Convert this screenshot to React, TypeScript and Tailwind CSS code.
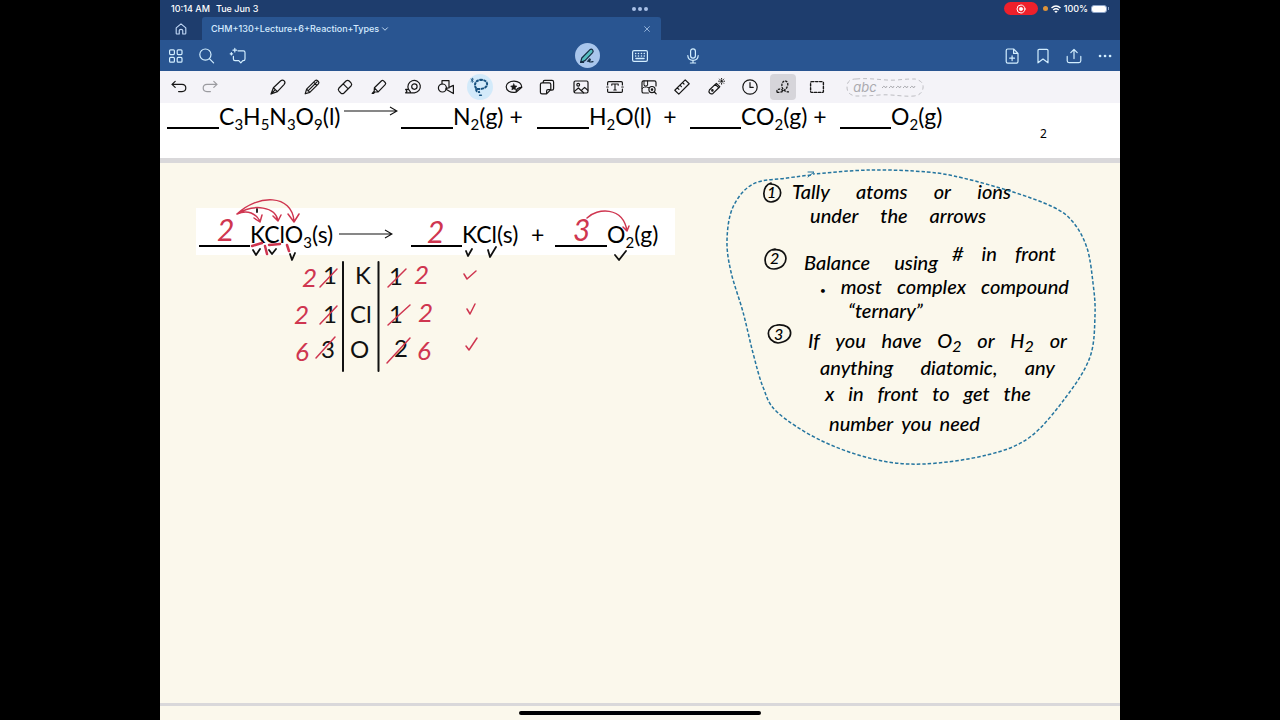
import type { ReactNode } from "react";
import clsx from "clsx";

type Point = [number, number];

/** Curve through the given points (Catmull-Rom as cubic Béziers). */
function curve(points: Point[]): string {
  let d = `M${points[0][0]} ${points[0][1]}`;
  for (let i = 0; i < points.length - 1; i++) {
    const a = points[Math.max(i - 1, 0)];
    const b = points[i];
    const c = points[i + 1];
    const e = points[Math.min(i + 2, points.length - 1)];
    d += `C${b[0] + (c[0] - a[0]) / 6} ${b[1] + (c[1] - a[1]) / 6} ${c[0] - (e[0] - b[0]) / 6} ${c[1] - (e[1] - b[1]) / 6} ${c[0]} ${c[1]}`;
  }
  return d;
}

const lasso: Point[] = [
  [811, 175], [787, 178], [753, 184], [733, 207], [727, 240], [731, 272], [743, 312], [753, 353],
  [763, 387], [777, 412], [820, 440], [873, 459], [923, 464], [987, 455], [1030, 437], [1066, 397],
  [1090, 357], [1095, 315], [1093, 283], [1087, 248], [1073, 222], [1053, 207], [1013, 192],
  [963, 178], [927, 172], [870, 170], [813, 174],
];

function Icon({ children, className = "size-5" }: { children: ReactNode; className?: string }) {
  return (
    <svg viewBox="0 0 20 20" fill="none" stroke="currentColor" strokeWidth="1.2" strokeLinecap="round" strokeLinejoin="round" className={className} aria-hidden="true">
      {children}
    </svg>
  );
}

const tools: { name: string; icon: ReactNode }[] = [
  {
    name: "Pen",
    icon: <path d="M3 17 5.400 10.800 12.500 4Q14.500 2.400 16.200 3.900 17.800 5.600 16 7.600L9.400 14.600ZM5.400 10.800 9.400 14.600M3 17 6.800 13.200" />,
  },
  {
    name: "Pencil",
    icon: <path d="M3.200 16.800 4.600 12.200 13.200 3.600Q14.400 2.600 15.600 3.700L16.500 4.600Q17.400 5.800 16.400 6.800L7.800 15.400ZM4.600 12.200 7.800 15.400M6 13.800 15 4.800M11.600 5.200 14.800 8.400" />,
  },
  {
    name: "Eraser",
    icon: <path d="M4 11 11 4Q12.600 2.600 14.200 4L16 5.800Q17.400 7.400 16 9L9 16Q7.400 17.400 5.800 16L4 14.200Q2.600 12.600 4 11ZM8.200 6.800 13.200 11.800" />,
  },
  {
    name: "Highlighter",
    icon: <path d="M3.200 16.400 5.200 14.200 5.400 10.800 12.600 3.800Q13.600 3 14.600 3.900L16.200 5.500Q17.200 6.600 16.200 7.600L9.200 14.800 5.800 15 4.600 16.400ZM5.400 10.800 9.200 14.800" />,
  },
  {
    name: "Tape",
    icon: (
      <>
        <path d="M5.600 12.400A6.200 6.200 0 1 1 11.400 15.800H2.600L4 14.200 2.600 12.400H5.600L7.400 14.800" />
        <circle cx="11.400" cy="9.600" r="2.700" />
      </>
    ),
  },
  {
    name: "Shapes",
    icon: (
      <>
        <circle cx="6.400" cy="11" r="4" />
        <path d="M6 7V3.600H13V11H10.400M9.600 12 17.400 8.400V16.600Z" />
      </>
    ),
  },
  {
    name: "Lasso",
    icon: (
      <>
        <path stroke="#17517f" strokeWidth="2" strokeDasharray="3.200 .6" strokeLinecap="butt" d="M6.600 11.800C3.600 9 4.600 3 11 2.800 17 2.800 18.600 7.400 15.800 10 13.400 12.200 8.800 12.400 6.600 11.800 5.400 13.400 7 15.600 10 14.800" />
        <path stroke="#17517f" strokeWidth="1.400" d="M9.600 18.200H11.400" />
        <path stroke="#17517f" strokeWidth=".8" d="M1 2.200 3.400 4.400 2.200 5.400V1L3.400 2.200 1 4.400" />
      </>
    ),
  },
  {
    name: "Stickers",
    icon: (
      <>
        <path d="M12 15.200C6 16.200 2.200 13.400 2.200 9.800 2.200 6.400 5.600 4.200 10 4.200S17.800 6.600 17.800 10.200L12 15.200Q11.800 11.200 17.800 10.200" />
        <path fill="currentColor" strokeWidth=".5" d="m9.800 6.800 1 2 2.200.3-1.600 1.600.4 2.200-2-1-2 1 .4-2.200-1.600-1.600 2.200-.3Z" />
      </>
    ),
  },
  {
    name: "Sticky note",
    icon: <path d="M6.200 5.600V5Q6.200 3.400 7.800 3.400H15Q16.600 3.400 16.600 5V11.600Q16.600 13.200 15 13.200H13.800M5 5.800H12.200Q13.800 5.800 13.800 7.400V12.600L9.600 16.800H5Q3.400 16.800 3.400 15.200V7.400Q3.400 5.800 5 5.800ZM9.600 16.800V14Q9.600 12.600 11 12.600H13.800" />,
  },
  {
    name: "Image",
    icon: (
      <>
        <rect x="3" y="4" width="14" height="12" rx="1.400" />
        <circle cx="7.200" cy="7.800" r="1.400" />
        <path d="m3.400 14.400 4-3.400 5.200 4.800M10.400 13.400l3.200-3 3.200 2.800" />
      </>
    ),
  },
  {
    name: "Text",
    icon: (
      <>
        <path d="M2.600 8V5.800Q2.600 4.600 3.800 4.600H16.200Q17.400 4.600 17.400 5.800V8M2.600 12V14.200Q2.600 15.400 3.800 15.400H16.200Q17.400 15.400 17.400 14.200V12M1.800 10H3.200M16.800 10H18.200" />
        <path strokeWidth="1.100" d="M6.800 8.200V7H13.200V8.200M10 7V13M8.800 13H11.200" />
      </>
    ),
  },
  {
    name: "Find in image",
    icon: (
      <>
        <path d="M9.400 16H4.600Q3 16 3 14.400V5.400Q3 3.800 4.600 3.800H15.400Q17 3.800 17 5.400V9" />
        <path strokeWidth="1" d="M3.200 11.600Q5 8.600 9.600 10.600M5 4V8.400Q6.800 9.600 8.600 8.400V4" />
        <circle cx="13" cy="12.600" r="3.100" />
        <circle cx="13" cy="12.600" r=".7" />
        <path d="m15.400 15 1.800 1.800" />
      </>
    ),
  },
  {
    name: "Ruler",
    icon: <path d="M2.800 13.200 13.200 2.900 17.200 6.800 6.800 17.100ZM5.400 10.800 6.900 12.300M8 8.200 9.400 9.600M10.600 5.600 12 7" />,
  },
  {
    name: "Laser pointer",
    icon: (
      <>
        <path d="M3.400 13 9.200 7.400 12.800 10.800 7 16.400Q5.200 17.600 3.800 16.200 2.200 14.800 3.400 13ZM9.200 7.400 10.400 6.400 13.800 9.600 12.800 10.800" />
        <circle cx="6.400" cy="13.400" r=".7" />
        <path strokeWidth="1" d="M15.600 2.200V1.400M15.600 6.400v.8M13.400 4.200h-.8M17.800 4.200h.8M14 2.600l-.5-.5M17.200 2.600l.5-.5M17.200 5.800l.5.500M14 5.800l-.5.500" />
        <circle cx="15.600" cy="4.200" r=".7" />
      </>
    ),
  },
  {
    name: "Recent",
    icon: (
      <>
        <circle cx="10" cy="10" r="7.200" />
        <path d="M10 5.600V10.400H13.200" />
      </>
    ),
  },
  {
    name: "Free selection",
    icon: (
      <path
        strokeWidth="1.300"
        strokeDasharray="2.400 1"
        strokeLinecap="butt"
        d="M4 15.400C9.600 16 14.600 11.600 14.800 7.400 14.800 3.400 10.600 2.800 9.200 6.200 7.800 10.400 10.600 15.600 17 14.800M10 14C8 11.600 5 11.400 4 13.400V15.400"
      />
    ),
  },
  {
    name: "Rectangular selection",
    icon: <rect x="3.600" y="4.600" width="12.800" height="10.800" rx="1" strokeDasharray="2.400 1.600" strokeWidth="1.400" />,
  },
];

function ToolButton({ name, children, className }: { name: string; children: ReactNode; className?: string }) {
  return (
    <button type="button" aria-label={name} className={clsx("flex items-center justify-center", className)}>
      {children}
    </button>
  );
}

function Blank() {
  return <span className="h-[26px] border-b-2 border-black" />;
}

function Sub({ children }: { children: ReactNode }) {
  return <sub className="bottom-[-5px] text-[15px] leading-none">{children}</sub>;
}

function ReactionArrow() {
  return (
    <svg viewBox="0 0 54 12" fill="none" stroke="#111" strokeWidth="1.1" className="h-3 w-[54px]" role="img" aria-label="yields">
      <path d="M0 6H53M46 2 53 6 46 10" />
    </svg>
  );
}

/** A piece of handwriting, placed where it was written on the page. */
function Ink({ className, children }: { className: string; children: ReactNode }) {
  return <div className={clsx("absolute leading-none whitespace-nowrap", className)}>{children}</div>;
}

function InkLine({ words, className }: { words: ReactNode[]; className: string }) {
  return (
    <div className={clsx("absolute flex justify-between leading-none whitespace-nowrap", className)}>
      {words.map((word, i) => (
        <span key={i}>{word}</span>
      ))}
    </div>
  );
}

function InkStrokes() {
  return (
    <svg className="absolute inset-0 size-full overflow-visible" fill="none" strokeLinecap="round" strokeLinejoin="round" aria-hidden="true">
      <g transform="translate(-160 -163)">
        <g stroke="#111" strokeWidth="2">
          <path d="M343 262V371M378.500 262V371" />
          <path strokeWidth="1.800" d="m253 250 3 5 4-6M269 250l3 4 4-5M290 254l2 6 3-7M466 251l2 5 4-7M488 250l2 7 6-10M615 255l4 5 7-9M257 209v3" />
        </g>
        <g stroke="#cf3650" strokeWidth="1.5">
          <path d="M237 214C248 209 256 214 260 221M254 218l6 4 2-7M237 214C254 203 276 207 278 221M273 216l5 5 3-6M237 214C258 194 292 194 294 221M288 214l6 8 5-8" />
          <path strokeWidth="2.500" d="M252 246 262 243M269 245l11-1M265 246l2 8M287 245l2 6" />
          <path d="M587 218C597 208 623 206 627 231M623 227l4 4 2-5" />
          <path d="M320 287 337 269M320 324 337 306M316 358 335 337M388 287 406 269M388 325 410 305M387 363 410 338" />
          <path d="m464 274 3 5 9-8M467 309l3 5 5-10M466 346l3 4 8-12" />
        </g>
        <g stroke="#111" strokeWidth="1.700">
          <path d="M771 183C762 185 761 202 771 202 784 201 784 184 770 184M775 249C763 250 761 269 774 269 791 268 789 247 773 250M779 325C765 325 765 341 778 343 795 342 795 323 777 325" />
        </g>
        <path d={curve(lasso)} stroke="#24759f" strokeWidth="1.500" strokeDasharray="3.500 2" strokeLinecap="butt" />
        <path d="m808 172 6 0-6 5" stroke="#24759f" />
      </g>
    </svg>
  );
}

function StatusBar() {
  return (
    <div className="grid h-[17px] grid-cols-3 items-center text-[9px] font-medium text-white">
      <div className="flex gap-1.5 pl-[11px]">
        <span>10:14 AM</span>
        <span>Tue Jun 3</span>
      </div>
      <div className="flex justify-center gap-[2px]">
        <span className="size-1 rounded-full bg-[#a9c0e6]" />
        <span className="size-1 rounded-full bg-[#a9c0e6]" />
        <span className="size-1 rounded-full bg-[#a9c0e6]" />
      </div>
      <div className="flex items-center justify-end pr-[11px]">
        <span className="mr-[5px] flex h-[13px] w-[34px] items-center justify-center rounded-full bg-[#ee202b]">
          <Icon className="size-2.5">
            <circle cx="10" cy="10" r="8" strokeWidth="2" />
            <circle cx="10" cy="10" r="3.500" fill="currentColor" />
          </Icon>
        </span>
        <span className="mr-[3px] size-[5px] rounded-full bg-[#dd9239]" />
        <svg viewBox="0 0 20 16" className="mr-[3px] h-2 w-2.5" fill="none" stroke="currentColor" strokeWidth="3" aria-hidden="true">
          <path d="M1 6Q10-2 19 6M4.500 10Q10 5 15.500 10" />
          <path d="M10 16 6.500 12.500Q10 10 13.500 12.500Z" fill="currentColor" stroke="none" />
        </svg>
        <span className="mr-[3px]">100%</span>
        <span className="h-2 w-4 rounded-[3px] border border-[#8ba3c8] bg-white" />
        <span className="ml-px h-[3px] w-px bg-[#8ba3c8]" />
      </div>
    </div>
  );
}

function TabBar() {
  return (
    <div className="flex h-[23px]">
      <ToolButton name="Home" className="w-[42px] text-[#c3daf8]">
        <Icon className="size-4">
          <path strokeWidth="1.400" d="M4 8.600 10 3.600 16 8.600V15.200Q16 16.200 15 16.200H12.200V11.800Q12.200 10.400 10 10.400T7.800 11.800V16.200H5Q4 16.200 4 15.200Z" />
        </Icon>
      </ToolButton>
      <div className="flex w-[459px] items-center justify-between rounded-t-[3px] bg-[#295591] pr-2 pl-[9px] text-[#d5ebff]">
        <button type="button" className="flex items-center gap-px text-[9px] font-medium">
          CHM+130+Lecture+6+Reaction+Types
          <Icon className="size-2.5">
            <path strokeWidth="1.800" d="m5 7.500 5 5 5-5" />
          </Icon>
        </button>
        <button type="button" aria-label="Close tab" className="text-[#9dbbe0]">
          <Icon className="size-3">
            <path strokeWidth="1.500" d="m6 6 8 8M14 6 6 14" />
          </Icon>
        </button>
      </div>
    </div>
  );
}

function NavBar() {
  return (
    <div className="grid h-[31px] grid-cols-3 bg-[#295591] text-[#d2eeff]">
      <div className="grid w-[93px] grid-cols-3">
        <ToolButton name="Thumbnails">
          <Icon>
            <rect x="3.600" y="3.800" width="4.800" height="4.800" rx="1" />
            <rect x="11.200" y="3.800" width="4.800" height="4.800" rx="1" />
            <rect x="3.600" y="11.400" width="4.800" height="4.800" rx="1" />
            <rect x="11.200" y="11.400" width="4.800" height="4.800" rx="1" />
          </Icon>
        </ToolButton>
        <ToolButton name="Search">
          <Icon>
            <circle cx="8.400" cy="8.600" r="5.600" />
            <path d="m12.600 12.800 4 4" />
          </Icon>
        </ToolButton>
        <ToolButton name="Assistant">
          <Icon>
            <path d="M10 4.800H15.400Q17 4.800 17 6.400V13Q17 14.600 15.400 14.600H14.800L12.800 16.800 10.800 14.600H7Q5.400 14.600 5.400 13V10.400M6.800 2.400V6M5 4.200H8.600M3.400 6.600V9M2.200 7.800H4.600" />
          </Icon>
        </ToolButton>
      </div>
      <div className="grid w-[159px] grid-cols-3 justify-self-center">
        <ToolButton name="Write">
          <span className="flex size-[25px] items-center justify-center rounded-full bg-[#a9c6ec] text-[#142c42]">
            <Icon>
              <path fill="#57bdc0" d="M4.800 12 12.800 3.800Q14.400 2.600 15.600 3.800 16.800 5 15.600 6.600L8 14.600 3.600 16.400Z" />
              <path d="M3.600 16.400H6.600M10.400 15.200Q14 14.600 13.200 13.200 12 12.400 11.600 14.600 12 16.800 16 15.600" />
            </Icon>
          </span>
        </ToolButton>
        <ToolButton name="Keyboard">
          <Icon>
            <rect x="2.600" y="4.600" width="14.800" height="10.800" rx="1.400" />
            <path d="M5.600 7.600h.1M8.400 7.600h.1M11.400 7.600h.1M14.200 7.600h.1M5.600 10h.1M8.400 10h.1M11.400 10h.1M14.200 10h.1M6 12.600H14" strokeWidth="1.500" />
          </Icon>
        </ToolButton>
        <ToolButton name="Dictate">
          <Icon>
            <rect x="7.600" y="2.800" width="4.800" height="9.400" rx="2.400" />
            <path d="M4.800 9.600Q5 14.400 10 14.400T15.200 9.600M10 14.400V17M7.400 17H12.600" />
          </Icon>
        </ToolButton>
      </div>
      <div className="grid w-[124px] grid-cols-4 justify-self-end">
        <ToolButton name="Add page">
          <Icon>
            <path d="M11.600 3H5.800Q4.200 3 4.200 4.600V15.600Q4.200 17.200 5.800 17.200H14.400Q16 17.200 16 15.600V7.400ZM11.600 3V7.400H16M10.100 9.800V14.600M7.700 12.200H12.500" />
          </Icon>
        </ToolButton>
        <ToolButton name="Bookmark">
          <Icon>
            <path d="M5 16.800V4.600Q5 3.400 6.200 3.400H13.800Q15 3.400 15 4.600V16.800L10 13Z" />
          </Icon>
        </ToolButton>
        <ToolButton name="Share">
          <Icon>
            <path d="M3.200 10.400V14.800Q3.200 16.600 5 16.600H15Q16.800 16.600 16.800 14.800V10.400M10 12.600V3.600M6.800 6.600 10 3.400 13.200 6.600" />
          </Icon>
        </ToolButton>
        <ToolButton name="More">
          <Icon>
            <path d="M5 10h.1M10 10h.1M15 10h.1" strokeWidth="2.600" />
          </Icon>
        </ToolButton>
      </div>
    </div>
  );
}

function Toolbar() {
  return (
    <div className="flex h-8 items-center bg-[#f4f3f8] text-[#161616]">
      <div className="grid w-[66px] grid-cols-2 pl-[3px]">
        <ToolButton name="Undo">
          <Icon>
            <path d="M6.200 4.400 3 7.400 6.200 10.400M3 7.400H13Q16.800 7.600 16.800 11T13 14.600H9.600" />
          </Icon>
        </ToolButton>
        <ToolButton name="Redo" className="text-[#9b9ba0]">
          <Icon>
            <path d="M13.800 4.400 17 7.400 13.800 10.400M17 7.400H7Q3.200 7.600 3.200 11T7 14.600H10.400" />
          </Icon>
        </ToolButton>
      </div>
      <div className="ml-[35px] grid w-[573px] grid-cols-17 items-center">
        {tools.map((tool) => (
          <ToolButton key={tool.name} name={tool.name}>
            <span
              className={clsx(
                "flex size-[26px] items-center justify-center",
                tool.name === "Lasso" && "rounded-full bg-[#d3eafa]",
                tool.name === "Free selection" && "rounded-[4px] bg-[#d6d5da]",
              )}
            >
              <Icon>{tool.icon}</Icon>
            </span>
          </ToolButton>
        ))}
      </div>
      <button type="button" className="relative ml-3 flex h-[19px] w-[78px] items-center justify-center gap-1 text-[#aaaaaf]">
        <svg viewBox="0 0 78 19" className="absolute inset-0 size-full" fill="none" stroke="#bdbdc2" strokeDasharray="4 3" aria-hidden="true">
          <path d="M10 1C26-.5 38 3 51 2 60 1 65 1 69 1Q78 3 77 10T68 18C56 19 47 16 33 17 22 18 16 18 10 18Q1 17 1 9T10 1Z" />
        </svg>
        <span className="text-[13px] leading-none italic">abc</span>
        <svg viewBox="0 0 36 6" className="h-1.5 w-9" fill="none" stroke="currentColor" aria-hidden="true">
          <path d="M1 4Q3 1 4 3T6 2M8 4Q10 1 11 3T13 2M15 4Q17 1 18 3T20 2M22 4Q24 1 25 3T27 2M29 4Q31 1 32 3T34 2" />
        </svg>
      </button>
    </div>
  );
}

function PreviousPage() {
  return (
    <section className="flex h-[55px] items-start bg-white pl-[7px]">
      <div className="grid grid-cols-[52px_125px_57px_52px_84px_52px_101px_51px_99px_51px_60px] text-[23px] leading-[26px] whitespace-nowrap">
        <Blank />
        <span>C<Sub>3</Sub>H<Sub>5</Sub>N<Sub>3</Sub>O<Sub>9</Sub>(l)</span>
        <span className="pt-0.5"><ReactionArrow /></span>
        <Blank />
        <span>N<Sub>2</Sub>(g) +</span>
        <Blank />
        <span>H<Sub>2</Sub>O(l)&nbsp; +</span>
        <Blank />
        <span>CO<Sub>2</Sub>(g) +</span>
        <Blank />
        <span>O<Sub>2</Sub>(g)</span>
      </div>
      <span className="mt-[23px] ml-[89px] font-['Noto_Sans',sans-serif] text-[12px] leading-4">2</span>
    </section>
  );
}

function CurrentPage() {
  return (
    <section className="relative grow border-t-[5px] border-b-[3px] border-[#d9d8da] bg-[#fbf8ec] pt-[45px]">
      <div className="ml-9 h-[47px] w-[479px] bg-white pt-[13px] pl-[3px]">
        <div className="grid grid-cols-[51px_89px_72px_51px_75px_18px_52px_60px] text-[23px] leading-[26px] whitespace-nowrap">
          <Blank />
          <span>KClO<Sub>3</Sub>(s)</span>
          <span className="flex items-center"><ReactionArrow /></span>
          <Blank />
          <span>KCl(s)</span>
          <span className="-ml-1.5">+</span>
          <Blank />
          <span>O<Sub>2</Sub>(g)</span>
        </div>
      </div>
      <div className="text-[26px] text-[#cf3650] italic">
        <Ink className="top-[51px] left-[57px] text-[30px]">2</Ink>
        <Ink className="top-[53px] left-[267px] text-[30px]">2</Ink>
        <Ink className="top-[51px] left-[413px] text-[30px]">3</Ink>
        <Ink className="top-[101px] left-[142px]">2</Ink>
        <Ink className="top-[98px] left-[254px]">2</Ink>
        <Ink className="top-[138px] left-[134px]">2</Ink>
        <Ink className="top-[136px] left-[258px]">2</Ink>
        <Ink className="top-[175px] left-[135px]">6</Ink>
        <Ink className="top-[174px] left-[257px]">6</Ink>
      </div>
      <div className="text-2xl leading-none text-[#111]">
        <Ink className="top-[100px] left-[163px]">1</Ink>
        <Ink className="top-[100px] left-[195px]">K</Ink>
        <Ink className="top-[101px] left-[229px]">1</Ink>
        <Ink className="top-[139px] left-[163px]">1</Ink>
        <Ink className="top-[139px] left-[190px]">Cl</Ink>
        <Ink className="top-[139px] left-[229px]">1</Ink>
        <Ink className="top-[174px] left-[161px]">3</Ink>
        <Ink className="top-[174px] left-[190px]">O</Ink>
        <Ink className="top-[173px] left-[234px]">2</Ink>
      </div>
      <div className="text-xl font-medium text-black italic">
        <Ink className="top-[21px] left-[607px] text-base">1</Ink>
        <InkLine className="top-[18px] left-[632px] w-[219px]" words={["Tally", "atoms", "or", "ions"]} />
        <InkLine className="top-[42px] left-[650px] w-[176px]" words={["under", "the", "arrows"]} />
        <Ink className="top-[87px] left-[610px] text-base">2</Ink>
        <InkLine className="top-[89px] left-[644px] w-[134px]" words={["Balance", "using"]} />
        <InkLine className="top-[80px] left-[792px] w-[104px]" words={["#", "in", "front"]} />
        <InkLine
          className="top-[113px] left-[660px] w-[249px] items-center"
          words={[<span className="text-[10px]">•</span>, "most", "complex", "compound"]}
        />
        <InkLine className="top-[137px] left-[688px] w-[100px]" words={["“ternary”"]} />
        <Ink className="top-[163px] left-[614px] text-base">3</Ink>
        <InkLine
          className="top-[167px] left-[648px] w-[259px]"
          words={["If", "you", "have", <>O<sub className="text-base leading-none">2</sub></>, "or", <>H<sub className="text-base leading-none">2</sub></>, "or"]}
        />
        <InkLine className="top-[194px] left-[660px] w-[235px]" words={["anything", "diatomic,", "any"]} />
        <InkLine className="top-[220px] left-[665px] w-[206px]" words={["x", "in", "front", "to", "get", "the"]} />
        <InkLine className="top-[250px] left-[669px] w-[151px]" words={["number", "you", "need"]} />
      </div>
      <InkStrokes />
    </section>
  );
}

export default function App() {
  return (
    <div className="flex min-h-screen justify-center bg-black">
      <main className="flex w-3/4 flex-col overflow-hidden bg-[#fbf8ec] font-['Lato',sans-serif] text-black">
        <header className="bg-[#1e3d6d] font-['Inter',sans-serif]">
          <StatusBar />
          <TabBar />
          <NavBar />
          <Toolbar />
        </header>
        <PreviousPage />
        <CurrentPage />
        <footer className="flex h-[14px] items-center justify-center">
          <span className="h-1 w-[242px] rounded-full bg-black" />
        </footer>
      </main>
    </div>
  );
}
